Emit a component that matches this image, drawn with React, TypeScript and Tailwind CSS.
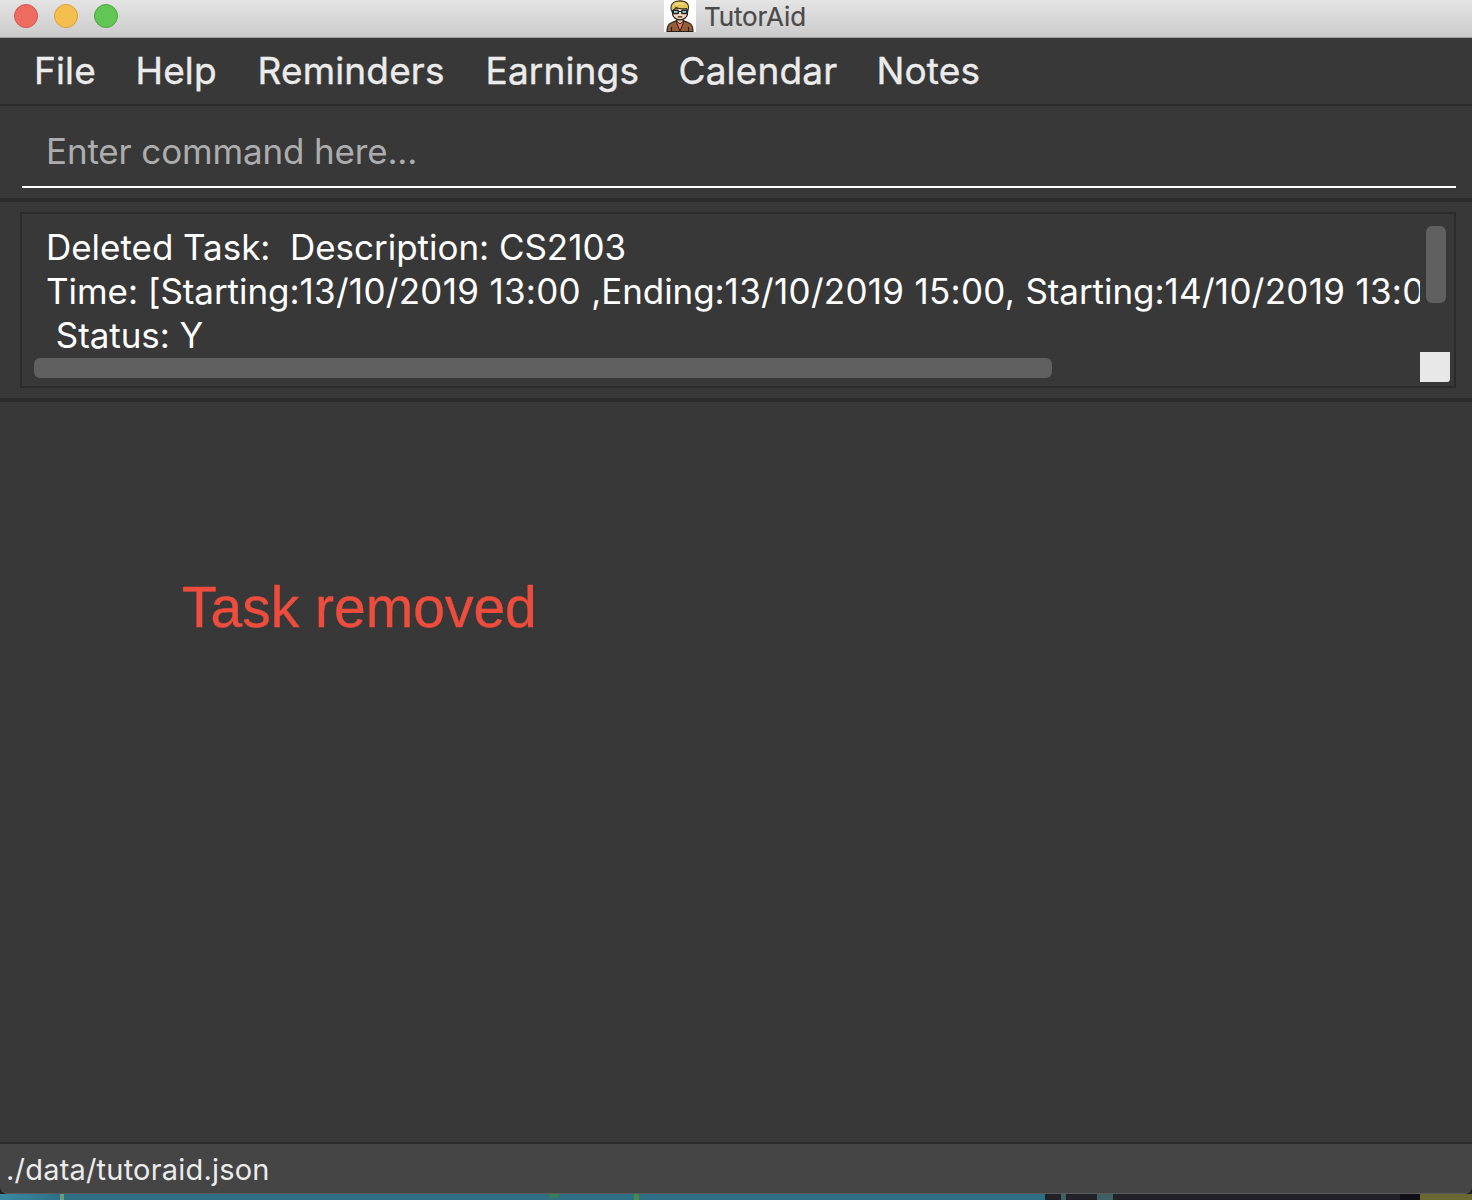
const menus = [
  { label: "File", width: "w-[101.5px]" },
  { label: "Help", width: "w-[122px]" },
  { label: "Reminders", width: "w-[228px]" },
  { label: "Earnings", width: "w-[193px]" },
  { label: "Calendar", width: "w-[198px]" },
  { label: "Notes", width: "w-[110px]" },
];

function TutorIcon() {
  return (
    <svg viewBox="0 0 32 32" className="h-8 w-8 shrink-0 bg-white">
      <path d="M3 31.500c0-6 1.500-8 5-9l4-1.600h8l4 1.600c3.500 1 5 3 5 9z" fill="#94603c" stroke="#2b1d17" strokeWidth="1.200" />
      <path d="M12 21.500 16 31l4-9.500z" fill="#e5766c" stroke="#2b1d17" strokeWidth="1" />
      <path d="M7.500 27v4.500M24.500 27v4.500" stroke="#2b1d17" strokeWidth="1.200" />
      <path d="M13 18v3.500l3 2.500 3-2.500V18z" fill="#e8b995" stroke="#2b1d17" strokeWidth="1" />
      <path d="M8.500 8v5.500c0 3.800 3.500 6.300 7.500 6.300s7.500-2.500 7.500-6.300V8z" fill="#f3d5b8" stroke="#2b2320" strokeWidth="1.300" />
      <path d="M7.500 11C6 6 8 2 12.500 1.200c5-.9 11.500-.2 12 5.300.1 2-.3 3.500-.8 4.500L22.500 8.500c-4 .8-7.500.3-10.500-1-1 2-2.500 2.500-4.500 3.500z" fill="#e6c559" stroke="#3a3020" strokeWidth="1.100" />
      <path d="M11 4.500c3-1.500 6-1.500 9 0" fill="none" stroke="#f8e493" strokeWidth="1.200" />
      <rect x="9.300" y="10.300" width="5" height="3.200" rx=".8" fill="#8fd8de" stroke="#20272b" strokeWidth="1.400" />
      <rect x="17.700" y="10.300" width="5" height="3.200" rx=".8" fill="#8fd8de" stroke="#20272b" strokeWidth="1.400" />
      <path d="M14.300 11.500h3.400M13.800 16.900h4.400" stroke="#2b2320" strokeWidth="1.100" />
    </svg>
  );
}

function TitleBar() {
  return (
    <header className="flex h-[38px] shrink-0 border-b border-[#9d9d9d] bg-linear-to-b from-[#e4e4e4] to-[#cbcbcb]">
      <div className="flex w-[664px] gap-4 pt-1 pl-[14px]">
        <span className="h-6 w-6 rounded-full border border-[#d9544b] bg-[#ed6b5f]" />
        <span className="h-6 w-6 rounded-full border border-[#dba03a] bg-[#f5bf4f]" />
        <span className="h-6 w-6 rounded-full border border-[#4aa83b] bg-[#61c654]" />
      </div>
      <TutorIcon />
      <h1 className="pl-2 text-[26px] leading-[33px] tracking-[-0.15px] text-[#4a4a4a] [-webkit-text-stroke:0.2px_#4a4a4a]">TutorAid</h1>
    </header>
  );
}

function Timing({ children }: { children: string }) {
  return <span className="tracking-[0.3px]">{children}</span>;
}

function ResultDisplay() {
  return (
    <section className="mx-4 ml-5 flex h-44 border-2 border-[#2b2b2b] pl-3">
      <div className="flex w-[1386px] shrink-0 flex-col">
        <div className="h-[144px] overflow-hidden pt-[11px] pl-[12px] text-[35px] leading-[44px] tracking-[-0.06px] whitespace-pre text-white">
          <p className="tracking-[-0.03px]">{"Deleted Task:  Description: CS2103"}</p>
          <p>
            {"Time: [Starting:"}
            <Timing>{"13/10/2019 13:00 "}</Timing>
            {",Ending:"}
            <Timing>{"13/10/2019 15:00, "}</Timing>
            {"Starting:"}
            <Timing>{"14/10/2019 13:0"}</Timing>
          </p>
          <p>{" Status: Y"}</p>
        </div>
        <div className="h-5 w-[1018px] rounded-md bg-[#606060]" />
      </div>
      <div className="flex w-[30px] shrink-0 flex-col items-center justify-between pt-3 pb-1">
        <div className="ml-0.5 h-[77px] w-5 rounded-md bg-[#606060]" />
        <div className="h-[30px] w-[30px] rounded-br-[3px] bg-[#e8e8e8]" />
      </div>
    </section>
  );
}

function DesktopStrip() {
  return (
    <div className="flex h-[6px] shrink-0 bg-[#222127]">
      <div className="h-full w-[60px] bg-linear-to-r from-[#3c88a3] to-[#2f7088]" />
      <div className="h-full w-[4px] bg-[#6a9e7b]" />
      <div className="h-full w-[485px] bg-[#2f6f86]" />
      <div className="h-full w-[10px] bg-linear-to-b from-[#40803f] to-[#2f6f86]" />
      <div className="h-full w-[75px] bg-[#2f6f86]" />
      <div className="h-full w-[5px] bg-[#4a8a48]" />
      <div className="h-full w-[406px] bg-[#2f6f86]" />
      <div className="ml-[16px] h-full w-[5px] bg-[#3f6166]" />
      <div className="ml-[31px] h-full w-[16px] bg-[#3f6166]" />
      <div className="ml-[287px] h-full w-5 bg-[#111017]" />
      <div className="h-full flex-1 bg-[#6a6832]" />
    </div>
  );
}

export default function App() {
  return (
    <div className="flex h-[1200px] w-[1472px] flex-col overflow-hidden bg-[#383838] font-[Inter,sans-serif]">
      <TitleBar />
      <nav className="flex h-[68px] shrink-0 border-b-2 border-[#2b2b2b] pl-[34px] text-[37px] leading-[66px] tracking-[0.15px] text-[#ebebeb] [-webkit-text-stroke:0.4px_#ebebeb]">
        {menus.map((m) => (
          <span key={m.label} className={m.width}>
            {m.label}
          </span>
        ))}
      </nav>
      <div className="h-24 shrink-0 border-b-4 border-[#2b2b2b] pr-4 pl-[22px]">
        <div className="h-[82px] border-b-2 border-white pt-[23px] pl-6 text-[35px] leading-[44px] tracking-[-0.16px] text-[#adadad]">
          Enter command here...
        </div>
      </div>
      <div className="h-[200px] shrink-0 border-b-4 border-[#2b2b2b] pt-[10px]">
        <ResultDisplay />
      </div>
      <main className="flex-1 pt-[171px] pl-[182px]">
        <p className="font-['Liberation_Sans',sans-serif] text-[57px] leading-[68px] text-[#ee4d3d] [-webkit-text-stroke:0.4px_#ee4d3d]">Task removed</p>
      </main>
      <div className="bg-[#222127]">
        <div className="h-[52px] rounded-b-lg border-t-2 border-b border-t-[#2b2b2b] border-b-[#5a5a5a] bg-[#454545] pl-[6px] text-[29px] leading-[51px] tracking-[0.2px] text-[#ebebeb]">
          ./data/tutoraid.json
        </div>
      </div>
      <DesktopStrip />
    </div>
  );
}
